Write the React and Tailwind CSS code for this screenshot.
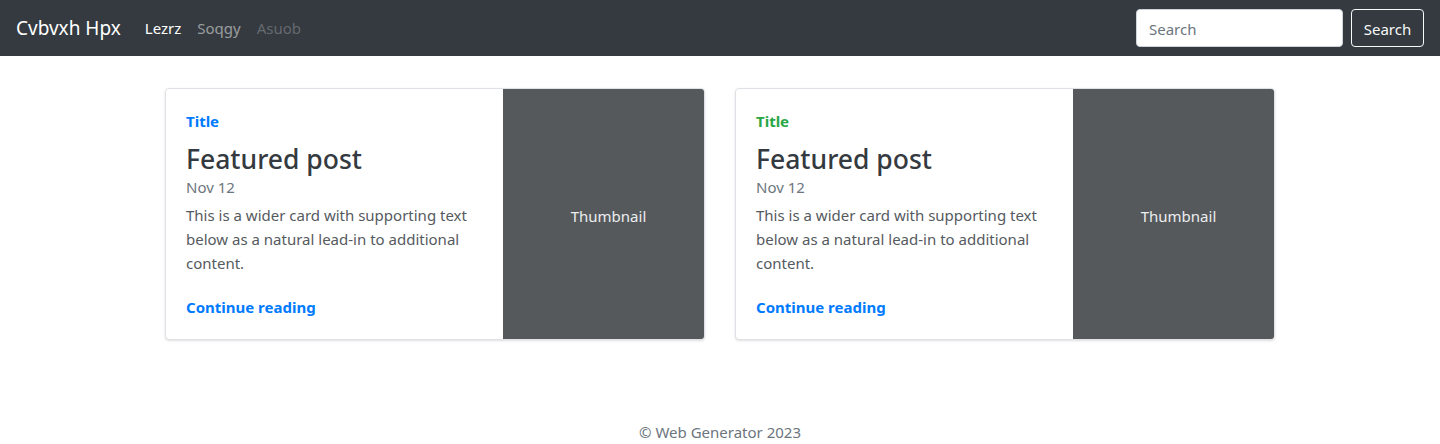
import React from 'react';

const posts = [
    { tag: 'Title', tagColor: 'text-[#007bff]' },
    { tag: 'Title', tagColor: 'text-[#28a745]' },
];

const FeaturedCard = ({ tag, tagColor }) => (
    <div className="flex h-[252px] overflow-hidden rounded border border-[#dee2e6] bg-white shadow-sm">
        <div className="flex flex-1 flex-col p-5">
            <strong className={`mb-2 text-[15px] leading-6 font-bold ${tagColor}`}>{tag}</strong>
            <h3 className="pt-[2px] text-[26.5px] leading-[32px] font-medium text-[#343a40]">Featured post</h3>
            <div className="mb-1 text-[15px] leading-6 text-[#6c757d]">Nov 12</div>
            <p className="mb-auto text-[15px] leading-6 text-[#555a60]">
                This is a wider card with supporting text below as a natural lead-in to additional content.
            </p>
            <a href="#" className="text-[15px] leading-6 font-bold text-[#007bff]">Continue reading</a>
        </div>
        <div className="flex w-[201px] items-center justify-center bg-[#55595c] pt-1 pl-[10px] text-[15px] text-[#eceeef]">
            Thumbnail
        </div>
    </div>
);

export default function App() {
    return (
        <div className="min-h-[444px] bg-white font-['Noto_Sans',sans-serif]">
            {/* Navbar */}
            <nav className="flex h-14 items-center bg-[#343a40] px-4">
                <a href="#" className="mr-4 text-[19px] text-white">Cvbvxh Hpx</a>
                <div className="flex">
                    <a href="#" className="px-2 text-[15px] text-white">Lezrz</a>
                    <a href="#" className="px-2 text-[15px] text-white/50">Soqgy</a>
                    <span className="px-2 text-[15px] text-white/25">Asuob</span>
                </div>
                <form className="ml-auto flex">
                    <input
                        type="text"
                        placeholder="Search"
                        className="mr-2 h-[38px] w-[207px] rounded border border-[#ced4da] bg-white px-3 pt-[2px] text-[15px] text-[#495057] placeholder:text-[#6c757d]"
                    />
                    <button type="button" className="h-[38px] w-[73px] rounded border border-[#f8f9fa] pt-[2px] text-[15px] text-[#f8f9fa]">
                        Search
                    </button>
                </form>
            </nav>

            {/* Cards */}
            <main className="mx-auto mt-8 grid w-[1140px] grid-cols-2 gap-[30px] px-[15px]">
                {posts.map((p, i) => (
                    <FeaturedCard key={i} {...p} />
                ))}
            </main>

            {/* Footer */}
            <footer className="mt-[80px] text-center text-[15px] leading-6 text-[#6c757d]">
                &copy; Web Generator 2023
            </footer>
        </div>
    );
}
